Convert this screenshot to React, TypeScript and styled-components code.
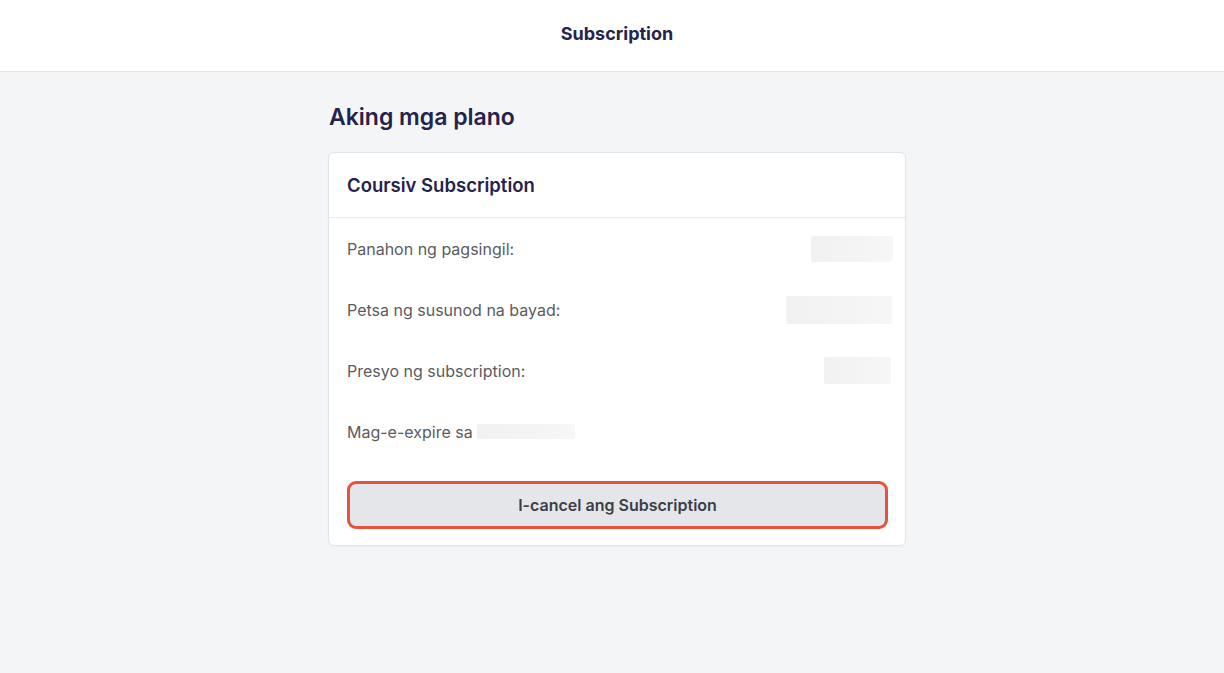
import React from "react";
import styled, { createGlobalStyle } from "styled-components";

const Global = createGlobalStyle`
  html, body { margin: 0; padding: 0; }
  body {
    background: #f4f5f7;
    font-family: Inter, "Noto Sans", "Liberation Sans", sans-serif;
    -webkit-font-smoothing: antialiased;
  }
`;

const Page = styled.div`
  min-height: 673px;
  display: flex;
  flex-direction: column;
`;

const Header = styled.header`
  height: 72px;
  box-sizing: border-box;
  padding: 0 0 5px 10px;
  background: #ffffff;
  border-bottom: 1px solid #e4e6ea;
  display: flex;
  align-items: center;
  justify-content: center;
`;

const HeaderTitle = styled.h1`
  margin: 0;
  font-size: 18px;
  font-weight: 650;
  color: #25244d;
`;

const Main = styled.main`
  width: 578px;
  margin: 0 auto;
  padding: 29px 0 0 10px;
`;

const Heading = styled.h2`
  margin: 0 0 19px 1px;
  font-size: 23px;
  line-height: 32px;
  font-weight: 600;
  color: #24234c;
`;

const Card = styled.section`
  background: #fff;
  border: 1px solid #e2e4e8;
  border-radius: 6px;
  box-shadow: 0 1px 2px rgba(0, 0, 0, 0.03);
`;

const CardHeader = styled.div`
  height: 64px;
  display: flex;
  align-items: center;
  padding: 0 18px;
  border-bottom: 1px solid #e8e9ec;
`;

const CardTitle = styled.h3`
  margin: 0;
  font-size: 18.5px;
  font-weight: 600;
  color: #24234c;
`;

const CardBody = styled.div`
  padding: 0 17px 16px 18px;
  display: flex;
  flex-direction: column;
`;

const Row = styled.div`
  height: 61px;
  display: flex;
  align-items: center;
  justify-content: space-between;
`;

const Label = styled.span`
  font-size: 16px;
  color: #5b5b62;
  display: flex;
  align-items: center;
`;

const Blur = styled.span<{ $w: number; $h: number; $shift?: number }>`
  display: inline-block;
  width: ${(p) => p.$w}px;
  height: ${(p) => p.$h}px;
  margin-right: ${(p) => p.$shift ?? 0}px;
  background: linear-gradient(90deg, #f1f1f2 0%, #f4f4f5 60%, #f7f7f8 100%);
  border-radius: 2px;
`;

const CancelButton = styled.button`
  margin-top: 19px;
  height: 48px;
  width: 100%;
  border: none;
  border-radius: 9px;
  background: #e5e6ea;
  outline: 3px solid #e5533d;
  outline-offset: -3px;
  font-family: inherit;
  font-size: 16px;
  font-weight: 600;
  color: #3d3d47;
  cursor: pointer;
`;

export default function App() {
  return (
    <>
      <Global />
      <Page>
        <Header>
          <HeaderTitle>Subscription</HeaderTitle>
        </Header>
        <Main>
          <Heading>Aking mga plano</Heading>
          <Card>
            <CardHeader>
              <CardTitle>Coursiv Subscription</CardTitle>
            </CardHeader>
            <CardBody>
              <Row>
                <Label>Panahon ng pagsingil:</Label>
                <Blur $w={82} $h={26} $shift={-5} />
              </Row>
              <Row>
                <Label>Petsa ng susunod na bayad:</Label>
                <Blur $w={106} $h={28} $shift={-4} />
              </Row>
              <Row>
                <Label>Presyo ng subscription:</Label>
                <Blur $w={67} $h={27} $shift={-3} />
              </Row>
              <Row>
                <Label>
                  Mag-e-expire sa&nbsp;
                  <Blur $w={98} $h={15} />
                </Label>
              </Row>
              <CancelButton>I-cancel ang Subscription</CancelButton>
            </CardBody>
          </Card>
        </Main>
      </Page>
    </>
  );
}
